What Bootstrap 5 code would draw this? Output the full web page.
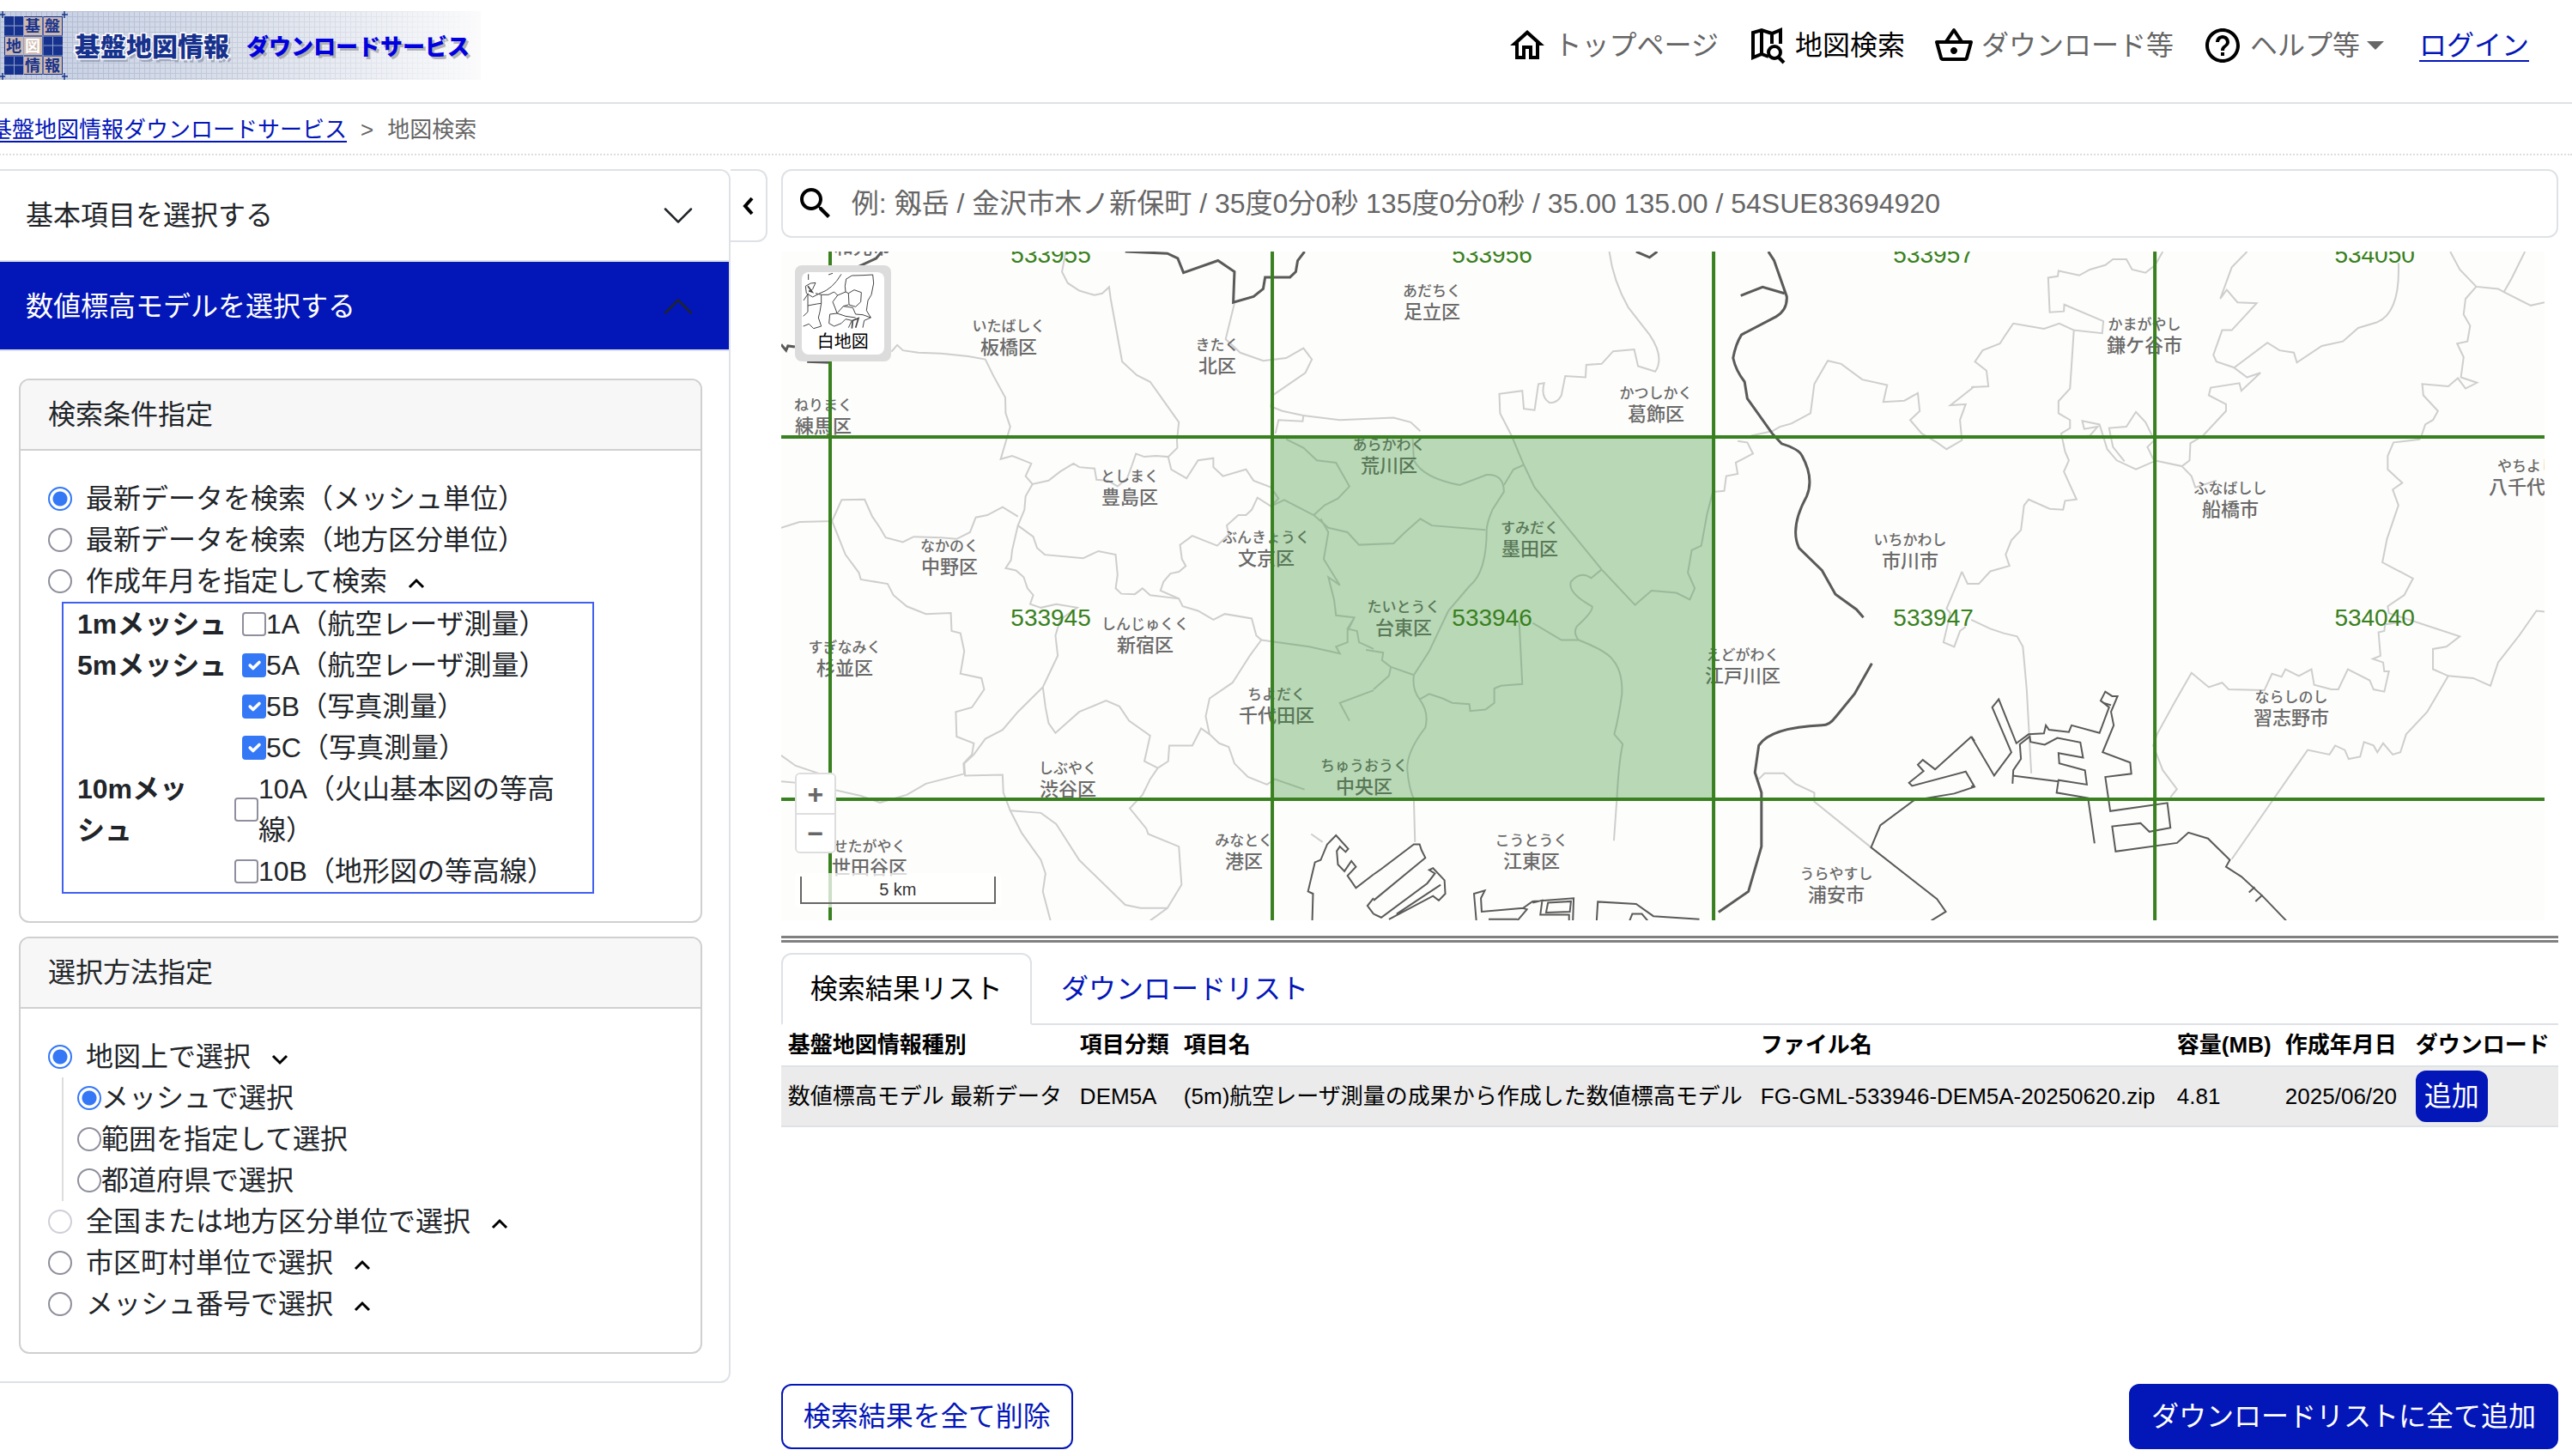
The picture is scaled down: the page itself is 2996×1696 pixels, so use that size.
<!DOCTYPE html>
<html lang="ja">
<head>
<meta charset="utf-8">
<meta name="viewport" content="width=device-width, initial-scale=1">
<title>基盤地図情報ダウンロードサービス - 地図検索</title>
<link href="https://cdn.jsdelivr.net/npm/bootstrap@5.3.0/dist/css/bootstrap.min.css" rel="stylesheet">
<style>
:root{--key:#0316b8;--line:#dee2e6}
body{font-family:"Liberation Sans","Noto Sans CJK JP",sans-serif;font-size:32px;line-height:48px;color:#212529;background:#fff;overflow-x:hidden}
a{color:var(--key)}
.site-head{height:121px;border-bottom:2px solid var(--line);padding:13px 50px 0 0}
.brand-logo{display:block;width:560px;height:80px}
.site-nav{gap:33px;height:80px}
.site-nav a{gap:8px;color:#666;text-decoration:none;white-space:nowrap}
.site-nav a.now{color:#000}
.site-nav a.login{color:var(--key);text-decoration:underline;text-underline-offset:6px;text-decoration-thickness:2px;margin-left:8px}
.ico{width:48px;height:48px;flex:none;fill:#000}
.ico-line{fill:none;stroke:#000;stroke-width:4}
.tri{border:solid transparent;border-width:10px 10px 0;border-top-color:#666;width:0;height:0}
.crumbs{height:60px;margin:0 0 16px -12px;border-bottom:2px dotted #ddd;font-size:26px;line-height:60px;color:#666}
.crumbs .breadcrumb-item+.breadcrumb-item{padding-left:16px}
.crumbs .breadcrumb-item+.breadcrumb-item::before{content:">";padding-right:16px;color:#666}
.crumbs a{text-underline-offset:4px}
.side{width:28.4%;flex:none}
.side.accordion{--bs-accordion-border-width:2px;--bs-accordion-border-color:#dee2e6;--bs-accordion-border-radius:12px;--bs-accordion-inner-border-radius:10px;--bs-accordion-btn-padding-x:30px;--bs-accordion-btn-padding-y:28px;--bs-accordion-btn-icon-width:40px;--bs-accordion-active-bg:var(--key);--bs-accordion-active-color:#fff;--bs-accordion-btn-active-icon:var(--bs-accordion-btn-icon);--bs-accordion-body-padding-x:22px;--bs-accordion-body-padding-y:32px}
.side .accordion-item{border-left:0;border-radius:0}
.side .accordion-item:first-child{border-top-right-radius:12px}
.side .accordion-item:last-child{border-bottom-right-radius:12px}
.side .accordion-button{font-size:32px;line-height:48px;padding-right:39px;border-radius:0;box-shadow:none}
.side .accordion-button:not(.collapsed){padding-top:28px;padding-bottom:26px;box-shadow:none;border-bottom:2px solid var(--line)}
.side .accordion-body{padding-right:31px}
.side .card{--bs-card-border-width:2px;--bs-card-border-color:#d0d0d0;--bs-card-border-radius:12px;--bs-card-inner-border-radius:10px;--bs-card-cap-bg:#f7f7f7;--bs-card-cap-padding-y:16px;--bs-card-cap-padding-x:32px;--bs-card-spacer-x:32px;--bs-card-spacer-y:32px}
.opt{display:flex;align-items:center;min-height:48px}
.opt .form-check-input{width:28px;height:28px;margin:0;flex:none;border:2px solid #8f8f9d}
.opt .form-check-input[type=checkbox]{border-radius:4px}
.opt .form-check-input[type=checkbox]:checked{background-color:#3478f6;border-color:#3478f6}
.opt .form-check-input[type=radio]:checked{background:#fff radial-gradient(circle,#3478f6 0 8px,transparent 9px);border-color:#3478f6}
.opt .form-check-input:disabled{opacity:1;border-color:#cfcfd8}
.opt .form-check-input:disabled~label{opacity:1}
.opt.wide{gap:16px}
.chev{width:20px;height:20px;fill:none;stroke:#000;stroke-width:3;margin:6px 0 0 8px}
.mesh-box{width:620px;max-width:100%;margin-left:16px;border:2px solid #4060ee;padding:0 0 0 16px;line-break:strict}
.mesh-box .kind{font-weight:700;width:192px;flex:none}
.mesh-box .kind.narrow{width:183px;padding-right:8px}
.mesh-box .pick{flex:1;padding-right:24px}
.nest{margin-left:16px;padding-left:16px;border-left:2px solid #ddd}
.fold{width:43px;height:85px;border:2px solid var(--line);border-left:0;border-radius:0 12px 12px 0;background:#fff;padding:0;flex:none}
.content-col{margin-left:16px;padding:0 16px 8px 0;min-width:0}
.finder{height:80px;border:2px solid var(--line);border-radius:12px;padding-left:14px;margin-bottom:16px}
.finder input{font-size:32px;padding:0 0 0 18px;border:0;color:#212529;background:none}
.finder input::placeholder{color:#666;opacity:1}
.map-wrap{position:relative;margin-right:16px}
.map-wrap>svg{display:block;width:100%;height:auto;background:#fdfdfb}
.layer-btn{position:absolute;left:16px;top:16px;width:112px;height:112px;border:8px solid #dcdcdc;border-radius:8px;background:#dcdcdc;padding:0}
.layer-btn span{display:block;background:#fff;border-radius:8px;height:96px;overflow:hidden;font-size:20px;line-height:30px;color:#000}
.layer-btn svg{display:block;width:96px;height:66px}
.zoomer{position:absolute;left:16px;bottom:78px;width:48px;border:2px solid #ddd;border-radius:6px;overflow:hidden;background:#fff}
.zoomer button{display:block;width:100%;height:45px;border:0;background:#fff;padding:0;font-weight:700;font-size:32px;line-height:42px;color:#666}
.zoomer button+button{border-top:2px solid #ddd}
.scale-bg{position:absolute;left:16px;bottom:15px;padding:4px 6px;background:rgba(255,255,255,.75);border-radius:4px}
.scale-bg div{width:228px;height:32px;border:2px solid #666;border-top:0;font-size:20px;line-height:30px;text-align:center;color:#333}
.splitter{height:8px;margin:18px 0 12px;border:solid #808080;border-width:3px 0;flex:none}
.nav-tabs{--bs-nav-tabs-border-width:2px;--bs-nav-tabs-border-radius:12px;--bs-nav-tabs-border-color:#dee2e6;--bs-nav-tabs-link-active-border-color:#dee2e6 #dee2e6 #fff;--bs-nav-tabs-link-active-color:#000;--bs-nav-link-padding-x:32px;--bs-nav-link-padding-y:16px;--bs-nav-link-color:var(--key)}
.nav-tabs .nav-link{font-size:32px;line-height:48px}
.results{font-size:26px;line-height:39px;color:#000;margin:0;white-space:nowrap}
.results th,.results td{padding:4px 8px;border-bottom:2px solid var(--line);color:#000}
.results tbody td{background:#ebebeb;vertical-align:middle}
.btn-key{--bs-btn-bg:#0316b8;--bs-btn-border-color:#0316b8;--bs-btn-color:#fff;--bs-btn-hover-bg:#02108a;--bs-btn-hover-color:#fff}
.btn-key-line{--bs-btn-bg:#fff;--bs-btn-border-color:#0316b8;--bs-btn-color:#0316b8;--bs-btn-hover-bg:#eef;--bs-btn-hover-color:#0316b8}
.btn{--bs-btn-font-size:32px;--bs-btn-line-height:48px;--bs-btn-border-width:2px;--bs-btn-border-radius:12px;--bs-btn-padding-x:24px;--bs-btn-padding-y:12px}
.btn-add{--bs-btn-padding-x:8px;--bs-btn-padding-y:4px}
.faint path{vector-effect:non-scaling-stroke;stroke:#cecece;stroke-width:2;fill:none}
.coast path{vector-effect:non-scaling-stroke;stroke:#5a5a5a;stroke-width:2;fill:none}
.coast .bold{stroke-width:3}
.ward{font-size:17px;font-weight:500;fill:#6a6a6a;text-anchor:middle;font-family:"Noto Sans CJK JP",sans-serif}
.ward .kj{font-size:22px}
.code{font-size:28px;fill:#388020;text-anchor:middle}
.grid-lines path{stroke:#388020;stroke-width:4;fill:none}
</style>
<script src="https://cdn.jsdelivr.net/npm/bootstrap@5.3.0/dist/js/bootstrap.bundle.min.js"></script>
</head>
<body class="d-flex flex-column min-vh-100">

<header class="site-head d-flex justify-content-between">
  <a href="#" aria-label="基盤地図情報 ダウンロードサービス">
    <svg class="brand-logo" viewBox="0 0 560 80" font-family="'Noto Sans CJK JP',sans-serif" font-weight="900">
      <defs>
        <linearGradient id="lg"><stop offset="0" stop-color="#c3cde3"/><stop offset=".5" stop-color="#dbe0ea"/><stop offset="1" stop-color="#fbfbfc"/></linearGradient>
        <linearGradient id="fade"><stop offset="0" stop-color="#fff"/><stop offset="1" stop-color="#fff" stop-opacity="0"/></linearGradient>
        <pattern id="pg" width="6" height="6" patternUnits="userSpaceOnUse"><path d="M.5 0V6M0 .5H6" stroke="#a9b3c9" stroke-width="1" opacity=".8"/></pattern>
        <mask id="mk"><rect width="560" height="80" fill="url(#fade)"/></mask>
      </defs>
      <rect width="560" height="80" fill="url(#lg)"/>
      <rect width="560" height="80" fill="url(#pg)" mask="url(#mk)"/>
      <path d="M0 4H6M3 0V8M72 4H79M75 0V8M0 76H6M3 72V80M72 76H79M75 72V80" stroke="#17378c" stroke-width="1.5"/>
      <rect x="5" y="6" width="68" height="68" fill="#17328c"/>
      <path d="M16.500 6V28M5 17H27M61.500 30V51M51 40H73M16.500 53V74M5 63H27M5 29H73M5 52H73M27.500 6V74M50 6V74" stroke="#8fa0cf" stroke-width="1"/>
      <g fill="#cdb9ae"><rect x="28" y="7" width="21" height="21"/><rect x="51" y="7" width="21" height="21"/><rect x="6" y="30" width="21" height="21"/><rect x="28" y="30" width="21" height="21"/><rect x="28" y="53" width="21" height="20"/><rect x="51" y="53" width="21" height="20"/></g>
      <g font-size="18" font-weight="700" fill="#17328c" text-anchor="middle"><text x="38" y="24">基</text><text x="61" y="24">盤</text><text x="16" y="47">地</text><text x="38" y="47" fill="#fff">図</text><text x="38" y="70">情</text><text x="61" y="70">報</text></g>
      <g font-size="30"><text x="90" y="56" fill="#8c95ab" opacity=".7">基盤地図情報</text><text x="87" y="52" fill="#17328c" stroke="#fff" stroke-width="3" paint-order="stroke">基盤地図情報</text></g>
      <g font-size="26"><text x="290" y="54" fill="#999" opacity=".7">ダウンロードサービス</text><text x="287" y="51" fill="#0000e0">ダウンロードサービス</text></g>
    </svg>
  </a>
  <nav class="site-nav d-flex align-items-center" aria-label="メイン">
    <a href="#" class="d-flex align-items-center"><svg class="ico" viewBox="0 0 24 24"><path d="M12 5.690l5 4.500V18h-2v-6H9v6H7v-7.810l5-4.500M12 3L2 12h3v8h6v-6h2v6h6v-8h3L12 3z"/></svg>トップページ</a>
    <a href="#" class="now d-flex align-items-center"><svg class="ico ico-line" viewBox="0 0 48 48"><path d="M25 37L17 34 7 38V9L17 6l12 4 10-4V22M17 6V34M29 10V22"/><circle cx="32" cy="32" r="7"/><path d="M36 37L43 44"/></svg>地図検索</a>
    <a href="#" class="d-flex align-items-center"><svg class="ico" viewBox="0 0 24 24"><path d="M22 9h-4.790l-4.380-6.560c-.19-.28-.51-.42-.83-.42s-.64.14-.83.43L6.790 9H2c-.55 0-1 .45-1 1 0 .09.01.18.04.27l2.540 9.270c.23.84 1 1.460 1.920 1.460h13c.92 0 1.690-.62 1.930-1.460l2.540-9.270L23 10c0-.55-.45-1-1-1zM12 4.800L14.800 9H9.200L12 4.800zM18.500 19l-12.990.01L3.310 11H20.700l-2.200 8zM12 13c-1.100 0-2 .9-2 2s.9 2 2 2 2-.9 2-2-.9-2-2-2z"/></svg>ダウンロード等</a>
    <a href="#" class="d-flex align-items-center"><svg class="ico" viewBox="0 0 24 24"><path d="M11 18h2v-2h-2v2zm1-16C6.480 2 2 6.480 2 12s4.480 10 10 10 10-4.480 10-10S17.520 2 12 2zm0 18c-4.410 0-8-3.590-8-8s3.590-8 8-8 8 3.590 8 8-3.590 8-8 8zm0-14c-2.210 0-4 1.790-4 4h2c0-1.100.9-2 2-2s2 .9 2 2c0 2-3 1.750-3 5h2c0-2.250 3-2.500 3-5 0-2.210-1.790-4-4-4z"/></svg>ヘルプ等<span class="tri"></span></a>
    <a href="#" class="login">ログイン</a>
  </nav>
</header>

<nav class="crumbs" aria-label="パンくず">
  <ol class="breadcrumb m-0">
    <li class="breadcrumb-item"><a href="#">基盤地図情報ダウンロードサービス</a></li>
    <li class="breadcrumb-item">地図検索</li>
  </ol>
</nav>

<main class="d-flex flex-grow-1">
  <div class="side accordion align-self-start">
    <div class="accordion-item">
      <h2 class="accordion-header"><button class="accordion-button collapsed" type="button" aria-expanded="false">基本項目を選択する</button></h2>
    </div>
    <div class="accordion-item">
      <h2 class="accordion-header"><button class="accordion-button" type="button" aria-expanded="true">数値標高モデルを選択する</button></h2>
      <div class="accordion-body">
        <section class="card mb-3">
          <div class="card-header">検索条件指定</div>
          <div class="card-body">
            <div class="opt wide"><input class="form-check-input" type="radio" name="cond" id="c1" checked><label for="c1">最新データを検索（メッシュ単位）</label></div>
            <div class="opt wide"><input class="form-check-input" type="radio" name="cond" id="c2"><label for="c2">最新データを検索（地方区分単位）</label></div>
            <div class="opt wide"><input class="form-check-input" type="radio" name="cond" id="c3"><label for="c3">作成年月を指定して検索</label><svg class="chev" viewBox="0 0 20 20"><path d="M2 14L10 6l8 8"/></svg></div>
            <div class="mesh-box">
              <div class="d-flex"><div class="kind">1mメッシュ</div><div class="pick">
                <div class="opt"><input class="form-check-input" type="checkbox" id="m1a"><label for="m1a">1A（航空レーザ測量）</label></div></div></div>
              <div class="d-flex"><div class="kind">5mメッシュ</div><div class="pick">
                <div class="opt"><input class="form-check-input" type="checkbox" id="m5a" checked><label for="m5a">5A（航空レーザ測量）</label></div>
                <div class="opt"><input class="form-check-input" type="checkbox" id="m5b" checked><label for="m5b">5B（写真測量）</label></div>
                <div class="opt"><input class="form-check-input" type="checkbox" id="m5c" checked><label for="m5c">5C（写真測量）</label></div></div></div>
              <div class="d-flex"><div class="kind narrow">10mメッシュ</div><div class="pick">
                <div class="opt"><input class="form-check-input" type="checkbox" id="m10a"><label for="m10a">10A（火山基本図の等高線）</label></div>
                <div class="opt"><input class="form-check-input" type="checkbox" id="m10b"><label for="m10b">10B（地形図の等高線）</label></div></div></div>
            </div>
          </div>
        </section>
        <section class="card">
          <div class="card-header">選択方法指定</div>
          <div class="card-body">
            <div class="opt wide"><input class="form-check-input" type="radio" name="how" id="h1" checked><label for="h1">地図上で選択</label><svg class="chev" viewBox="0 0 20 20"><path d="M2 6l8 8 8-8"/></svg></div>
            <div class="nest">
              <div class="opt"><input class="form-check-input" type="radio" name="onmap" id="s1" checked><label for="s1">メッシュで選択</label></div>
              <div class="opt"><input class="form-check-input" type="radio" name="onmap" id="s2"><label for="s2">範囲を指定して選択</label></div>
              <div class="opt"><input class="form-check-input" type="radio" name="onmap" id="s3"><label for="s3">都道府県で選択</label></div>
            </div>
            <div class="opt wide"><input class="form-check-input" type="radio" name="how" id="h2" disabled><label for="h2">全国または地方区分単位で選択</label><svg class="chev" viewBox="0 0 20 20"><path d="M2 14L10 6l8 8"/></svg></div>
            <div class="opt wide"><input class="form-check-input" type="radio" name="how" id="h3"><label for="h3">市区町村単位で選択</label><svg class="chev" viewBox="0 0 20 20"><path d="M2 14L10 6l8 8"/></svg></div>
            <div class="opt wide"><input class="form-check-input" type="radio" name="how" id="h4"><label for="h4">メッシュ番号で選択</label><svg class="chev" viewBox="0 0 20 20"><path d="M2 14L10 6l8 8"/></svg></div>
          </div>
        </section>
      </div>
    </div>
  </div>

  <button class="fold d-flex align-items-center justify-content-center" type="button" aria-label="パネルを閉じる"><svg width="14" height="22" viewBox="0 0 14 22" fill="none" stroke="#000" stroke-width="4"><path d="M12 2L4 11l8 9"/></svg></button>

  <div class="content-col flex-grow-1 d-flex flex-column">
    <div class="finder d-flex align-items-center">
      <svg class="ico" viewBox="0 0 24 24"><path d="M15.500 14h-.79l-.28-.27C15.410 12.590 16 11.110 16 9.500 16 5.910 13.090 3 9.500 3S3 5.910 3 9.500 5.910 16 9.500 16c1.610 0 3.090-.59 4.230-1.570l.27.28v.79l5 4.990L20.490 19l-4.990-5zm-6 0C7.010 14 5 11.990 5 9.500S7.010 5 9.500 5 14 7.010 14 9.500 11.990 14 9.500 14z"/></svg>
      <input class="form-control shadow-none" type="text" aria-label="検索" placeholder="例: 剱岳 / 金沢市木ノ新保町 / 35度0分0秒 135度0分0秒 / 35.00 135.00 / 54SUE83694920">
    </div>

    <div class="map-wrap">
      <svg viewBox="0 0 2054 779" role="img" aria-label="白地図">
        <g class="faint">
          <g transform="translate(-10 -13) scale(.4464 .523)">
            <path d="M765 25L755 70 770 95 800 112 840 122 860 118 878 104 882 130 912 270 950 300 985 315 1010 345 1035 375 1060 405 1055 445 1056 462 1032 482 1000 480 970 482 948 475 938 500 925 530 900 548 875 535 845 533 840 508 800 505 785 497 750 515 720 535 678 543 660 525 675 497 640 485 625 480 595 487 620 415 608 385 607 350 575 300 555 265 510 258 440 252 380 250 340 245 325 233 310 248"/>
            <path d="M678 543L660 570 657 600 640 635 625 690 622 712 608 730 635 735 655 750 665 775 680 790 672 810 700 818 740 810 795 818 750 845 738 880 744 925 705 995 640 1050 600 1090 555 1110 525 1145 500 1165 502 1192 600 1190 602 1230 620 1270 650 1320 700 1380 712 1410 705 1450 725 1515"/>
            <path d="M640 635L680 660 690 685 710 700 810 708 850 692 895 700 900 745 895 775 910 787 945 788 965 775 985 790 1060 798"/>
            <path d="M1032 482L1040 510 1080 530 1110 490 1150 485 1150 505 1175 525 1235 510 1255 535 1300 550 1320 575 1300 592 1265 573 1250 600 1235 612 1215 612 1185 635 1190 655 1160 680 1130 670 1095 658 1063 678 1068 710 1078 725 1060 738 1038 742 1020 760 1012 780 1060 798 1070 815 1110 825 1150 845 1180 832 1250 842 1262 880 1275 890 1245 925 1200 985 1140 1020 1130 1060 1140 1100 1165 1120 1190 1128 1205 1165 1240 1195 1290 1212 1310 1200 1388 1223"/>
            <path d="M22 640L70 627 155 625 180 578 240 577 260 615 280 640 295 662 340 672 368 660 440 662 480 665 515 650 530 617 560 612 600 594 640 615"/>
            <path d="M155 625L190 700 225 740 230 755 300 765 315 790 350 815 400 832 465 830 467 870 490 875 500 915 490 965 545 975 552 1000 520 1040 478 1050 480 1105 525 1120 520 1145 498 1165 500 1188 400 1210 350 1235 280 1252 230 1237 90 1210 22 1205"/>
            <path d="M22 1147L60 1170 130 1190M705 995L712 1040 720 1075 738 1097 800 1050 870 1025 905 1038 930 1070 985 1103 970 1160 1005 1175 985 1200 965 1235 932 1265 975 1310 980 1322 1060 1350 1067 1435 1030 1487 985 1515M1005 1175L1032 1160 1035 1125 1095 1125 1118 1087 1140 1100M620 1270L700 1275 740 1300 800 1380 920 1480 960 1487 1030 1487"/>
            <path d="M1205 140L1182 220 1220 250 1280 268 1340 262 1385 240 1407 265 1390 295 1305 345 1300 370 1330 380 1385 390 1383 403 1320 400 1312 430M1385 390L1480 400 1620 395 1665 405 1690 425M1340 443L1385 462 1420 490 1470 495 1505 548 1475 575 1440 590 1412 612 1335 578 1300 592M1412 612L1450 640 1500 650 1530 678 1620 675 1650 650 1690 620 1720 635 1860 645"/>
            <path d="M1430 620L1450 650 1438 710 1480 768 1450 750 1465 800 1470 835 1518 840 1500 870 1500 895 1470 905 1480 920 1400 905 1275 890M1518 840L1500 865 1525 870 1530 895 1568 910M1568 1002L1480 1030 1505 1070M1405 1322L1435 1340"/>
          </g>
          <g transform="translate(690 -13) scale(.4464 .523)">
            <path d="M615 25Q625 90 665 150L720 210Q760 260 735 292L690 280 680 243 625 247 595 275 555 277 553 305 500 302 490 345Q480 362 460 362Q435 350 445 318L430 320 420 378 392 375 388 335 328 342 330 385 360 435 392 500 420 550 595 733 682 812 725 780 790 785 825 800 838 775 820 740 830 690 855 680 870 610 885 560 915 558 920 525 950 520 945 495 990 475 975 450 950 447"/>
            <path d="M102 440L105 490Q130 530 225 545L295 522Q340 520 340 560L310 600Q295 630 295 645 295 740 250 770L195 825 145 915 105 968Q100 1000 120 1022 145 1050 135 1085 85 1140 88 1180 92 1220 105 1245L108 1340"/>
            <path d="M340 545L365 510 392 500M595 733L568 752Q540 735 515 760 505 785 570 815 575 825 530 860 520 875 535 890 610 915 625 935 650 960 648 1010 640 1060 628 1100L650 1122Q640 1160 635 1240L627 1337M380 850L388 988 332 992 315 998 315 1030 292 1045 252 1048 250 1033 205 1030 180 1020 145 1010 120 1022M415 852L490 890 535 890M-20 912L25 918 22 935 45 950 40 970 0 1000M45 950L105 968"/>
            <path d="M985 435L1040 425 1060 415 1090 408 1140 385 1150 320 1185 268 1220 275 1275 310 1340 322 1330 360 1385 357 1420 340 1425 380 1400 400 1430 430 1470 450 1495 465 1535 445 1530 400 1545 365 1505 367 1568 325M1005 1200L1020 1187 1070 1187 1100 1210 1150 1230 1150 1250 1298 1352M1535 738L1520 770 1495 820 1505 830 1487 895 1515 905 1530 870 1545 860M1535 738L1550 765 1568 765"/>
          </g>
          <g transform="translate(1386 -13) scale(.4464 .523)">
            <path d="M500 25L480 55 455 72 420 65 405 42 370 42 350 55 310 65 282 78 228 68 226 80 201 83 205 160 242 158 243 143 345 180 342 207 268 200 258 330 228 358 228 385 258 400 258 418 235 430 245 470 255 490 242 515 275 577 245 580 240 600 205 598 150 577 138 590 130 645 105 668 90 700 100 725 50 737 20 765 0 765M268 200L230 185 190 197 110 185 90 210 75 230 30 245 10 270 40 290 45 325 0 327"/>
            <path d="M245 440L310 435 330 415 295 420 290 402 335 410 355 465 380 490 430 510 478 492 460 460 478 445 455 405 430 382 405 415 360 418 370 460 400 492M478 490L550 503 570 490 572 452 605 435 665 380 665 365 620 345 625 328 700 318 705 335 755 295 720 305 685 283 640 270 632 255 655 200 680 200 745 140 695 138 667 110 650 130 680 60 720 25M550 503L575 525 585 550 640 535"/>
            <path d="M1115 50Q1120 160 1060 182L1010 195 970 225 915 235 850 272 842 250 805 245 773 228 687 283M1250 25L1275 65 1318 103 1375 108 1390 115 1460 145 1496 138M1390 115L1410 85 1445 25M1318 103L1290 130 1285 165 1302 190 1295 225 1268 230 1285 260 1278 305 1320 317 1290 330 1270 307 1245 325 1177 320 1180 345 1218 380 1205 400 1185 410 1175 435 1170 443 1102 450 1087 480 1087 510 1125 540 1100 555 1115 590 1085 665 1073 717 1153 753 1130 790 1087 815 1090 830 1275 882 1240 905 1205 910 1205 955 1245 970 1310 975 1355 992 1375 940 1430 880 1475 825 1496 827"/>
            <path d="M1130 850L1080 855 1078 870 1063 873 1068 925 1048 932 1075 940 1078 960 1090 960 1078 1005 1050 1000 1040 980 983 955 958 1000 940 1000 895 990 888 955 855 970 820 955 810 972 785 965 765 1002 672 1000 655 985 620 995 575 963 530 1030 485 1100 475 1125 500 1180 537 1222 520 1240M1245 970L1190 1050 1135 1100 1120 1140 1100 1145 1075 1120 1060 1140 1050 1125 1025 1117 1015 1150 985 1155 975 1135 950 1125 935 1145 878 1135 680 1378M0 845L50 865 85 875 120 882 135 905 145 1000 157 1187"/>
          </g>
        </g>
        <g class="coast">
          <g transform="translate(-10 -13) scale(.4464 .523)">
            <path class="bold" d="M920 25L1030 29 1057 40 1072 72 1162 45 1205 70 1202 138 1255 125 1280 108 1285 82 1350 82 1365 70 1370 45 1388 25M22 232L35 245 40 235 58 237M220 60L270 40 285 25M90 270L150 272"/>
            <path d="M1408 1515L1410 1455 1397 1450 1415 1385 1430 1380 1447 1345 1470 1325 1502 1355 1495 1362 1480 1350 1472 1360 1475 1390 1492 1405 1510 1382 1522 1395 1500 1415 1522 1442 1568 1412M1568 1465L1552 1482 1568 1500"/>
          </g>
          <g transform="translate(690 -13) scale(.4464 .523)">
            <path class="bold" d="M1030 25L1045 45 1078 125Q1080 155 1050 170L960 210Q945 230 938 262 945 290 968 315L975 352 1040 430 1065 453Q1110 465 1118 480 1150 530 1130 570 1085 640 1110 685L1170 735 1205 788 1260 822 1278 840M958 123L1015 104 1072 118M685 25L720 38 740 25M1300 942L1255 1010 1205 1062Q1190 1080 1170 1080 1035 1085 1005 1125L995 1185 1012 1230 1012 1350 978 1450 900 1496"/>
            <path d="M0 1412L20 1400 105 1345 120 1345 125 1358 135 1375 0 1470M0 1500L20 1508 140 1432 160 1410 145 1402 155 1398 185 1425 187 1455 170 1470 155 1460 40 1512M60 1500L175 1435M268 1515L262 1455 290 1448 280 1465 282 1495 390 1487 415 1472 522 1465 520 1515M390 1487L400 1490 375 1515M300 1512L375 1512M415 1475L440 1470 435 1502 510 1502 510 1515M455 1475L515 1472 512 1495 450 1497ZM582 1515L585 1473 685 1478 730 1505 850 1512M668 1515L675 1500 700 1500 715 1515"/>
            <path d="M1560 1105L1465 1178 1433 1157 1420 1168 1435 1182 1397 1208 1405 1215 1545 1183 1568 1217 1515 1232 1410 1247 1322 1303 1298 1352 1470 1467 1493 1495 1455 1515M1560 1105L1568 1115"/>
          </g>
          <g transform="translate(1386 -13) scale(.4464 .523)">
            <path d="M0 1105L60 1192 105 1140 55 1040 72 1022 118 1120 150 1100 190 1098 195 1080 203 1090 255 1095 262 1080 335 1097 360 1040 338 1025 350 1005 368 1015 382 1015 365 1050 372 1080 343 1140 415 1163 418 1188 350 1195 363 1271 512 1253 520 1308 465 1317 442 1298 368 1305 377 1361 537 1342 567 1319 618 1332 675 1380 665 1395 705 1417 760 1460 822 1515"/>
            <path d="M108 1210L110 1180 130 1155 127 1122 153 1105 155 1117 192 1123 225 1108 285 1118 292 1152 228 1142 230 1165 297 1180 302 1212 228 1202 223 1230 305 1242 322 1343M108 1192L228 1205M345 1030L365 1035M725 1452L740 1440M742 1472L760 1458M0 1217L8 1213"/>
          </g>
        </g>
        <g class="ward">
          <text x="95" y="2" class="kj">和光市</text>
          <text x="265" y="93">いたばしく<tspan class="kj" x="265" dy="26">板橋区</tspan></text>
          <text x="508" y="115">きたく<tspan class="kj" x="508" dy="26">北区</tspan></text>
          <text x="49" y="185">ねりまく<tspan class="kj" x="49" dy="26">練馬区</tspan></text>
          <text x="406" y="268">としまく<tspan class="kj" x="406" dy="26">豊島区</tspan></text>
          <text x="196" y="349">なかのく<tspan class="kj" x="196" dy="26">中野区</tspan></text>
          <text x="565" y="339">ぶんきょうく<tspan class="kj" x="565" dy="26">文京区</tspan></text>
          <text x="424" y="440">しんじゅくく<tspan class="kj" x="424" dy="26">新宿区</tspan></text>
          <text x="74" y="467">すぎなみく<tspan class="kj" x="74" dy="26">杉並区</tspan></text>
          <text x="577" y="522">ちよだく<tspan class="kj" x="577" dy="26">千代田区</tspan></text>
          <text x="334" y="608">しぶやく<tspan class="kj" x="334" dy="26">渋谷区</tspan></text>
          <text x="103" y="699">せたがやく<tspan class="kj" x="103" dy="26">世田谷区</tspan></text>
          <text x="539" y="692">みなとく<tspan class="kj" x="539" dy="26">港区</tspan></text>
          <text x="708" y="231">あらかわく<tspan class="kj" x="708" dy="26">荒川区</tspan></text>
          <text x="758" y="52">あだちく<tspan class="kj" x="758" dy="26">足立区</tspan></text>
          <text x="1019" y="171">かつしかく<tspan class="kj" x="1019" dy="26">葛飾区</tspan></text>
          <text x="872" y="328">すみだく<tspan class="kj" x="872" dy="26">墨田区</tspan></text>
          <text x="725" y="420">たいとうく<tspan class="kj" x="725" dy="26">台東区</tspan></text>
          <text x="1120" y="476">えどがわく<tspan class="kj" x="1120" dy="26">江戸川区</tspan></text>
          <text x="1315" y="342">いちかわし<tspan class="kj" x="1315" dy="26">市川市</tspan></text>
          <text x="679" y="605">ちゅうおうく<tspan class="kj" x="679" dy="26">中央区</tspan></text>
          <text x="874" y="692">こうとうく<tspan class="kj" x="874" dy="26">江東区</tspan></text>
          <text x="1229" y="731">うらやすし<tspan class="kj" x="1229" dy="26">浦安市</tspan></text>
          <text x="1588" y="91">かまがやし<tspan class="kj" x="1588" dy="26">鎌ケ谷市</tspan></text>
          <text x="1688" y="282">ふなばしし<tspan class="kj" x="1688" dy="26">船橋市</tspan></text>
          <text x="1759" y="525">ならしのし<tspan class="kj" x="1759" dy="26">習志野市</tspan></text>
          <text x="2033" y="256">やちよし<tspan class="kj" x="2033" dy="26">八千代市</tspan></text>
        </g>
        <rect x="572" y="216" width="514" height="422" fill="#389336" fill-opacity=".35"/>
        <g class="grid-lines"><path d="M57 0V779M572 0V779M1086 0V779M1600 0V779M0 216H2054M0 638H2054"/></g>
        <g class="code">
          <text x="314" y="13">533955</text><text x="828" y="13">533956</text><text x="1342" y="13">533957</text><text x="1856" y="13">534050</text>
          <text x="314" y="436">533945</text><text x="828" y="436">533946</text><text x="1342" y="436">533947</text><text x="1856" y="436">534040</text>
        </g>
      </svg>
      <button class="layer-btn" type="button"><span>
        <svg viewBox="87 381 288 198" fill="none" stroke="#444" stroke-width="3"><path d="M110 388v20M225 388Q195 440 150 455L125 468 103 455 100 430 118 420 135 418 125 440 115 450M180 390l15-5M110 455L93 480M135 455L155 460 180 460 200 450 212 462 240 450 238 430 242 405 262 393 300 392 335 390 338 420 330 460 318 480 313 515 328 540 305 550 300 575M155 460L155 490 140 492 108 498 108 520 92 535M108 498L108 460M155 490L150 520 145 540 155 570 128 578M92 570L112 562 128 578M212 462L195 485 205 510 210 525 185 528 182 560 200 570M240 450L250 455 270 443 295 452 293 485 275 502 252 495 250 455M250 495L232 500 210 525M232 500L265 505 275 528 300 530 328 540M210 525L240 535 275 540M200 570L225 560 240 545 262 550 250 575"/><path stroke-width="5" d="M262 578L265 550 285 542 275 575M108 430l15 20-12-4"/></svg>白地図</span></button>
      <div class="zoomer"><button type="button" aria-label="拡大">+</button><button type="button" aria-label="縮小">−</button></div>
      <div class="scale-bg"><div>5 km</div></div>
    </div>

    <div class="splitter"></div>

    <ul class="nav nav-tabs">
      <li class="nav-item"><a class="nav-link active" href="#" aria-current="page">検索結果リスト</a></li>
      <li class="nav-item"><a class="nav-link" href="#">ダウンロードリスト</a></li>
    </ul>
    <table class="table results">
      <colgroup><col style="width:340px"><col style="width:121px"><col style="width:672px"><col style="width:485px"><col style="width:126px"><col style="width:152px"><col></colgroup>
      <thead><tr><th>基盤地図情報種別</th><th>項目分類</th><th>項目名</th><th>ファイル名</th><th>容量(MB)</th><th>作成年月日</th><th>ダウンロード</th></tr></thead>
      <tbody><tr><td>数値標高モデル 最新データ</td><td>DEM5A</td><td>(5m)航空レーザ測量の成果から作成した数値標高モデル</td><td>FG-GML-533946-DEM5A-20250620.zip</td><td>4.81</td><td>2025/06/20</td><td><button class="btn btn-key btn-add" type="button">追加</button></td></tr></tbody>
    </table>

    <div class="d-flex justify-content-between mt-auto">
      <button class="btn btn-key-line" type="button">検索結果を全て削除</button>
      <button class="btn btn-key" type="button">ダウンロードリストに全て追加</button>
    </div>
  </div>
</main>
</body>
</html>
